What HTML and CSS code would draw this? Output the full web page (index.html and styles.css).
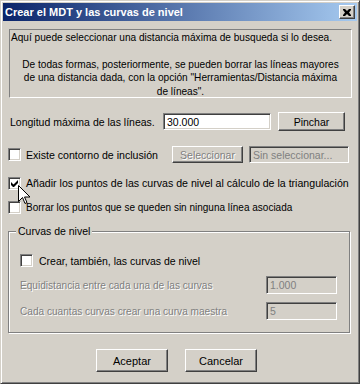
FILE: index.html
```html
<!DOCTYPE html>
<html lang="es">
<head>
  <meta charset="UTF-8" />
  <title>Crear el MDT y las curvas de nivel</title>
  <link rel="stylesheet" href="styles.css">
</head>
<body>
  <div class="window">
    <div class="titlebar">
      <span class="title">Crear el MDT y las curvas de nivel</span>
      <button class="close-btn" type="button">
        <svg width="8" height="7" viewBox="0 0 8 7"><path d="M0 0h2l2 2 2-2h2v1L6 3.5 8 6v1H6L4 5 2 7H0V6l2-2.5L0 1z" fill="#000"/></svg>
      </button>
    </div>

    <div class="client">
      <!-- texto de ayuda -->
      <div class="info">
        <p>Aquí puede seleccionar una distancia máxima de busqueda si lo desea.</p>
        <p class="center">De todas formas, posteriormente, se pueden borrar las líneas mayores<br>de una distancia dada, con la opción "Herramientas/Distancia máxima<br>de líneas".</p>
      </div>

      <div class="row row-longitud">
        <label class="lbl-longitud">Longitud máxima de las líneas.</label>
        <div class="edit edit-longitud">30.000</div>
        <button class="btn btn-pinchar" type="button">Pinchar</button>
      </div>

      <div class="row row-contorno">
        <span class="check"></span>
        <span class="check-text text-contorno">Existe contorno de inclusión</span>
        <button class="btn btn-sel disabled" type="button">Seleccionar</button>
        <div class="edit edit-sin disabled-edit">Sin seleccionar...</div>
      </div>

      <div class="row row-anadir">
        <span class="check checked">
          <svg width="7" height="7" viewBox="0 0 7 7"><path d="M0 2v3l2 2h1l4-4V0L2.5 4.5z" fill="#000"/></svg>
        </span>
        <span class="check-text text-anadir">Añadir los puntos de las curvas de nivel al cálculo de la triangulación</span>
      </div>

      <div class="row row-borrar">
        <span class="check"></span>
        <span class="check-text text-borrar">Borrar los puntos que se queden sin ninguna línea asociada</span>
      </div>

      <div class="group">
        <span class="group-label">Curvas de nivel</span>
        <div class="row row-crear">
          <span class="check"></span>
          <span class="check-text text-crear">Crear, también, las curvas de nivel</span>
        </div>
        <div class="row row-param">
          <span class="param-label disabled-text">Equidistancia entre cada una de las curvas</span>
          <div class="edit edit-param disabled-edit">1.000</div>
        </div>
        <div class="row row-param">
          <span class="param-label disabled-text">Cada cuantas curvas crear una curva maestra</span>
          <div class="edit edit-param disabled-edit">5</div>
        </div>
      </div>

      <div class="buttons">
        <button class="btn btn-dlg" type="button">Aceptar</button>
        <button class="btn btn-dlg" type="button">Cancelar</button>
      </div>
    </div>

    <svg class="cursor" width="12" height="20" viewBox="0 0 12 20">
      <path d="M0.5 0.5v16l4-4 2.5 6 2-1-2.5-5.5h5.5z" fill="#fff" stroke="#000" stroke-width="1"/>
    </svg>
  </div>
</body>
</html>
```

FILE: styles.css
```css
body {
  margin: 0;
  font-family: "Liberation Sans", Arial, sans-serif;
  font-size: 10.5px;
  color: #000;
  background: #d4d0c8;
}
.window {
  position: relative;
  width: 360px;
  height: 384px;
  box-sizing: border-box;
  background: #d4d0c8;
  border: 1px solid;
  border-color: #d4d0c8 #404040 #404040 #d4d0c8;
  box-shadow: inset 1px 1px #fff, inset -1px -1px #808080;
  padding: 2px;
}
.titlebar {
  height: 18px;
  display: flex;
  align-items: center;
  justify-content: space-between;
  padding: 0 2px 0 2px;
  background: linear-gradient(to right, #0a246a, #a6caf0);
}
.title {
  color: #fff;
  font-weight: bold;
  font-size: 11px;
  white-space: nowrap;
}
.close-btn {
  width: 16px;
  height: 14px;
  padding: 0;
  display: flex;
  align-items: center;
  justify-content: center;
  background: #d4d0c8;
  border: 1px solid;
  border-color: #fff #404040 #404040 #fff;
  box-shadow: inset -1px -1px #808080;
}
.client {
  padding: 0 5px;
  display: flex;
  flex-direction: column;
}
.info {
  margin: 8px 0 0 1px;
  height: 69px;
  box-sizing: border-box;
  border: 1px solid;
  border-color: #808080 #fff #fff #808080;
  padding: 1px 1px 0 1px;
  white-space: nowrap;
  font-size: 10.1px;
}
.info p { margin: 0; line-height: 13.5px; }
.info p.center { text-align: center; margin-top: 13px; }

.row { display: flex; align-items: center; }
.row-longitud { margin-top: 14px; height: 19px; }
.lbl-longitud { width: 155px; padding-left: 2px; box-sizing: border-box; white-space: nowrap; }
.edit {
  box-sizing: border-box;
  height: 17px;
  background: #fff;
  border: 1px solid;
  border-color: #808080 #fff #fff #808080;
  box-shadow: inset 1px 1px #404040, inset -1px -1px #d4d0c8;
  padding: 2px 3px 0 3px;
  line-height: 13px;
  white-space: nowrap;
  overflow: hidden;
}
.edit-longitud { width: 108px; }
.btn {
  font-family: inherit;
  font-size: 10.5px;
  color: #000;
  background: #d4d0c8;
  border: 1px solid;
  border-color: #fff #404040 #404040 #fff;
  box-shadow: inset -1px -1px #808080;
  padding: 0;
}
.btn-pinchar { width: 67px; height: 19px; margin-left: 7px; }

.row-contorno { margin-top: 15px; height: 17px; }
.check {
  width: 13px;
  height: 13px;
  box-sizing: border-box;
  background: #fff;
  border: 1px solid;
  border-color: #808080 #fff #fff #808080;
  box-shadow: inset 1px 1px #404040, inset -1px -1px #d4d0c8;
  display: flex;
  align-items: center;
  justify-content: center;
  flex: none;
}
.check-text { margin-left: 5px; white-space: nowrap; }
.text-contorno { width: 146px; font-size: 10.6px; }
.text-anadir { font-size: 10.6px; }
.text-borrar { font-size: 10px; }
.btn-sel { width: 71px; height: 17px; }
.disabled, .disabled-text {
  color: #808080;
  text-shadow: 1px 1px #fff;
}
.edit-sin { width: 100px; margin-left: 6px; height: 17px; }
.disabled-edit { background: #d4d0c8; color: #808080; }

.row-anadir { margin-top: 13px; height: 14px; }
.row-borrar { margin-top: 10px; height: 14px; }

.group {
  position: relative;
  margin: 17px 2px 0 0;
  height: 102px;
  box-sizing: border-box;
  border: 1px solid #808080;
  box-shadow: inset 1px 1px #fff, 1px 1px #fff;
  padding: 0 11px;
}
.group-label {
  position: absolute;
  top: -7px;
  left: 7px;
  padding: 0 2px;
  background: #d4d0c8;
}
.row-crear { margin-top: 22px; height: 13px; }
.text-crear { margin-left: 6px; }
.row-param { justify-content: space-between; margin-top: 9px; height: 18px; padding-right: 1px; }
.row-param + .row-param { margin-top: 8px; }
.param-label { white-space: nowrap; font-size: 10.1px; }
.edit-param { width: 71px; height: 18px; }

.buttons {
  display: flex;
  gap: 17px;
  margin-top: 16px;
  padding-left: 88px;
}
.btn-dlg { width: 72px; height: 23px; font-size: 11px; }

.cursor {
  position: absolute;
  left: 17px;
  top: 184px;
}
```
